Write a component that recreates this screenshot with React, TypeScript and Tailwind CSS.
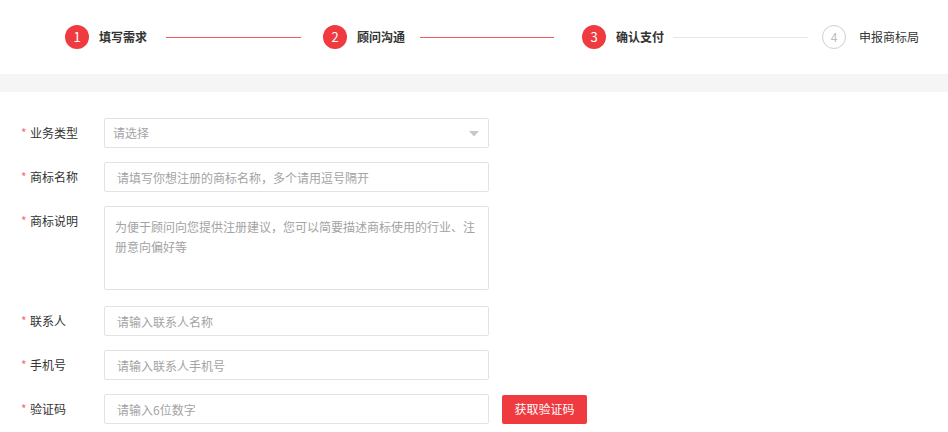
import React from "react";

const font = { fontFamily: '"Noto Sans CJK SC", "Noto Sans", sans-serif' };

function Circle({ n, active }: { n: number; active: boolean }) {
  return active ? (
    <div className="w-[24px] h-[24px] rounded-full bg-[#ef3a3f] text-white text-[13px] flex items-center justify-center shrink-0">
      {n}
    </div>
  ) : (
    <div className="w-[24px] h-[24px] rounded-full border border-[#cfcfcf] text-[#bbbbbb] text-[12px] flex items-center justify-center shrink-0">
      {n}
    </div>
  );
}

function Label({ text }: { text: string }) {
  return (
    <div className="w-[104px] shrink-0 pl-[21px] flex items-start h-[30px] leading-[30px] text-[12px] text-[#333333]">
      <span className="text-[#f26d73] w-[9px] text-[12px]">*</span>
      <span>{text}</span>
    </div>
  );
}

const inputCls =
  "w-[385px] h-[30px] border border-[#e3e3e3] rounded-[2px] pl-[12px] text-[12px] text-[#333] placeholder:text-[#a3a3a3] outline-none bg-white";

export default function App() {
  return (
    <div className="w-[948px] h-[432px] bg-white overflow-hidden" style={font}>
      {/* steps */}
      <div className="h-[74px] flex items-center pl-[65px] text-[12px]">
        <Circle n={1} active />
        <span className="ml-[10px] font-bold text-[#333]">填写需求</span>
        <div className="ml-[19px] w-[135px] h-[1px] bg-[#ee5a5f]" />
        <div className="ml-[22px]"><Circle n={2} active /></div>
        <span className="ml-[10px] font-bold text-[#333]">顾问沟通</span>
        <div className="ml-[15px] w-[134px] h-[1px] bg-[#ee5a5f]" />
        <div className="ml-[28px]"><Circle n={3} active /></div>
        <span className="ml-[10px] font-bold text-[#333]">确认支付</span>
        <div className="ml-[9px] w-[135px] h-[1px] bg-[#e6e6e6]" />
        <div className="ml-[14px]"><Circle n={4} active={false} /></div>
        <span className="ml-[13px] text-[#333]">申报商标局</span>
      </div>
      <div className="h-[18px] bg-[#f5f5f5]" />

      {/* form */}
      <div className="pt-[26px]">
        <div className="flex mb-[14px]">
          <Label text="业务类型" />
          <div className="relative w-[385px] h-[30px] border border-[#e3e3e3] rounded-[2px] flex items-center pl-[8px] text-[12px] text-[#a3a3a3]">
            请选择
            <svg className="absolute right-[9px] top-[12px]" width="10" height="6" viewBox="0 0 10 6">
              <path d="M0 0 L10 0 L5 5.5 Z" fill="#c8c8c8" />
            </svg>
          </div>
        </div>

        <div className="flex mb-[14px]">
          <Label text="商标名称" />
          <input className={inputCls} placeholder="请填写你想注册的商标名称，多个请用逗号隔开" />
        </div>

        <div className="flex mb-[16px]">
          <Label text="商标说明" />
          <textarea
            className="w-[385px] h-[84px] border border-[#e3e3e3] rounded-[2px] pl-[10px] pr-[8px] pt-[10px] text-[12px] leading-[20px] text-[#333] placeholder:text-[#a3a3a3] outline-none resize-none"
            placeholder="为便于顾问向您提供注册建议，您可以简要描述商标使用的行业、注册意向偏好等"
          />
        </div>

        <div className="flex mb-[14px]">
          <Label text="联系人" />
          <input className={inputCls} placeholder="请输入联系人名称" />
        </div>

        <div className="flex mb-[14px]">
          <Label text="手机号" />
          <input className={inputCls} placeholder="请输入联系人手机号" />
        </div>

        <div className="flex items-center">
          <Label text="验证码" />
          <input className={inputCls} placeholder="请输入6位数字" />
          <button className="ml-[13px] w-[85px] h-[29px] bg-[#ef3a3f] text-white text-[12px] rounded-[2px]">
            获取验证码
          </button>
        </div>
      </div>
    </div>
  );
}
